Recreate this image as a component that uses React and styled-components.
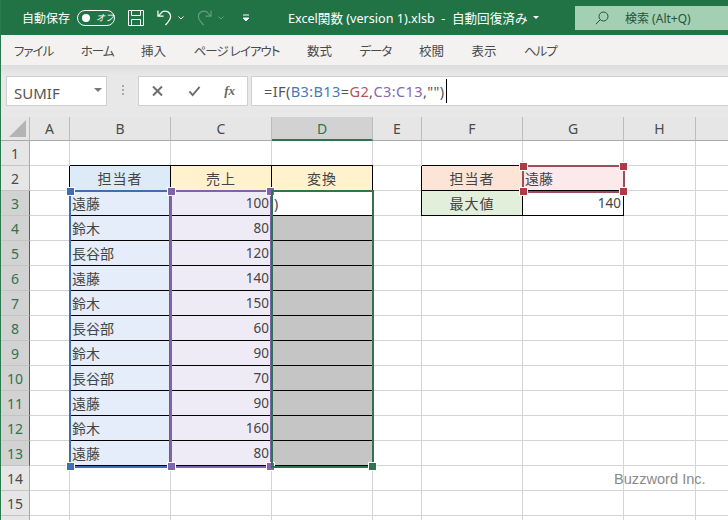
import React from 'react';
import styled, { createGlobalStyle } from 'styled-components';

const FONT = '"Noto Sans", "Noto Sans CJK JP", sans-serif';

const GlobalStyle = createGlobalStyle`
  html, body {
    margin: 0;
    padding: 0;
    background: #fff;
  }
  * {
    box-sizing: border-box;
  }
`;

const COLUMNS = ['A', 'B', 'C', 'D', 'E', 'F', 'G', 'H', ''];
const TABS = [
  { label: 'ファイル', tight: true },
  { label: 'ホーム', tight: true },
  { label: '挿入' },
  { label: 'ページ レイアウト', tight: true },
  { label: '数式' },
  { label: 'データ', tight: true },
  { label: '校閲' },
  { label: '表示' },
  { label: 'ヘルプ', tight: true },
];

const SALES = [
  ['遠藤', 100],
  ['鈴木', 80],
  ['長谷部', 120],
  ['遠藤', 140],
  ['鈴木', 150],
  ['長谷部', 60],
  ['鈴木', 90],
  ['長谷部', 70],
  ['遠藤', 90],
  ['鈴木', 160],
  ['遠藤', 80],
];

// contents of one sheet row, keyed by column letter
const rowCells = (row) => {
  if (row === 2) {
    return {
      B: { text: '担当者', bg: '#dcebf7', boxed: true, center: true },
      C: { text: '売上', bg: '#fff2cc', boxed: true, center: true },
      D: { text: '変換', bg: '#fff2cc', boxed: true, center: true },
      F: { text: '担当者', bg: '#fce4d6', boxed: true, center: true },
      G: { text: '遠藤', bg: '#fbe9ec', boxed: true },
    };
  }
  const cells = {};
  if (row >= 3 && row <= 13) {
    const [name, amount] = SALES[row - 3];
    cells.B = { text: name, bg: '#e4edf9', boxed: true };
    cells.C = { text: amount, bg: '#efebf6', boxed: true, right: true };
    cells.D = row === 3
      ? { text: ')', bg: '#fff', boxed: true }
      : { bg: '#c5c5c5', boxed: true };
  }
  if (row === 3) {
    cells.F = { text: '最大値', bg: '#e2efda', boxed: true, center: true };
    cells.G = { text: 140, bg: '#fff', boxed: true, right: true };
  }
  return cells;
};

// row 16 only peeks in at the window's bottom edge, its number is not visible
const ROWS = Array.from({ length: 16 }, (_, i) => i + 1);

const FORMULA = [
  ['=IF(', '#555'],
  ['B3:B13', '#4a78b5'],
  ['=', '#555'],
  ['G2', '#b5535d'],
  [',', '#555'],
  ['C3:C13', '#8668ae'],
  [',"")', '#555'],
];

const App = () => (
  <Page>
    <GlobalStyle />
    <TitleBar>
      <AutoSave>自動保存</AutoSave>
      <Toggle>
        <ToggleDot />
        <ToggleLabel>オフ</ToggleLabel>
      </Toggle>
      <SaveIcon viewBox="0 0 16 16">
        <path d="M.5.5h15v15H.5zM3.500.5v5h9v-5M3.500 15.500v-6h9v6" />
      </SaveIcon>
      <UndoIcon viewBox="0 0 16 18">
        <path d="M1 1.500v6h6M1.500 7.500l3.500-4c4-3 9.500-.5 9.500 4.500 0 3-1.500 5-5.500 9" />
      </UndoIcon>
      <SmallCaret viewBox="0 0 6 4"><path d="M.5.500 3 3 5.500.500" /></SmallCaret>
      <RedoIcon viewBox="0 0 16 18">
        <path d="M15 1.500v6H9M14.500 7.500l-3.500-4c-4-3-9.500-.5-9.500 4.500 0 3 1.500 5 5.500 9" />
      </RedoIcon>
      <FadedCaret viewBox="0 0 6 4"><path d="M.5.500 3 3 5.500.500" /></FadedCaret>
      <CustomizeIcon viewBox="0 0 8 8">
        <path d="M1 1h6" />
        <path d="M1 4h6L4 7z" fill="#fff" />
      </CustomizeIcon>
      <DocTitle>Excel関数 (version 1).xlsb  -  自動回復済み</DocTitle>
      <TitleCaret />
      <SearchBox>
        <SearchIcon viewBox="0 0 14 14">
          <circle cx="8.500" cy="5.500" r="4.500" />
          <path d="M5.300 8.700.8 13.200" />
        </SearchIcon>
        <SearchText>検索 (Alt+Q)</SearchText>
      </SearchBox>
    </TitleBar>

    <TabBar>
      {TABS.map((tab) => <Tab key={tab.label} $tight={tab.tight}>{tab.label}</Tab>)}
    </TabBar>

    <FormulaBand>
      <NameBox>
        SUMIF
        <NameCaret />
      </NameBox>
      <Grip />
      <ButtonBox>
        <BarIcon viewBox="0 0 12 12">
          <path d="M1.500 1.500l9 9M10.500 1.500l-9 9" />
        </BarIcon>
        <BarIcon viewBox="0 0 14 12">
          <path d="M1.500 6.500 5 10.500 12.500 1.500" />
        </BarIcon>
        <FxLabel>fx</FxLabel>
      </ButtonBox>
      <FormulaBox>
        {FORMULA.map(([text, color], i) => (
          <FormulaPart key={i} $color={color}>{text}</FormulaPart>
        ))}
        <Caret />
      </FormulaBox>
    </FormulaBand>

    <Sheet>
      <Corner>
        <CornerMark viewBox="0 0 17 17"><path d="M17 0v17H0z" /></CornerMark>
      </Corner>
      {COLUMNS.map((col) => (
        <ColHead key={col || 'I'} $active={col === 'D'}>{col}</ColHead>
      ))}
      {ROWS.map((row) => {
        const cells = rowCells(row);
        return (
          <React.Fragment key={row}>
            <RowHead $active={row >= 3 && row <= 13}>{row < 16 ? row : ''}</RowHead>
            {COLUMNS.map((col) => {
              const cell = cells[col] || {};
              return (
                <Cell
                  key={col || 'I'}
                  $bg={cell.bg}
                  $boxed={cell.boxed}
                  $center={cell.center}
                  $right={cell.right}
                >
                  {cell.text}
                </Cell>
              );
            })}
          </React.Fragment>
        );
      })}

      <RangeBox $left={68} $top={73} $width={102} $height={278} $color="#3f6fb0">
        <Handle $x="left" $y="top" $color="#3f6fb0" />
        <Handle $x="left" $y="bottom" $color="#3f6fb0" />
      </RangeBox>
      <RangeBox $left={169} $top={73} $width={102} $height={278} $color="#8064a8">
        <Handle $x="left" $y="top" $color="#8064a8" />
        <Handle $x="right" $y="top" $color="#8064a8" />
        <Handle $x="left" $y="bottom" $color="#8064a8" />
        <Handle $x="right" $y="bottom" $color="#8064a8" />
      </RangeBox>
      <RangeBox $left={270} $top={73} $width={103} $height={278} $color="#2f7350">
        <Handle $x="right" $y="bottom" $color="#2f7350" />
      </RangeBox>
      <RangeBox $left={521} $top={48} $width={103} $height={28} $color="#97505a">
        <Handle $x="left" $y="top" $color="#b03a48" />
        <Handle $x="right" $y="top" $color="#b03a48" />
        <Handle $x="left" $y="bottom" $color="#b03a48" />
        <Handle $x="right" $y="bottom" $color="#b03a48" />
      </RangeBox>
      <Watermark>Buzzword Inc.</Watermark>
    </Sheet>
  </Page>
);

const Page = styled.div`
  width: 728px;
  height: 520px;
  overflow: hidden;
  font-family: ${FONT};
  border-left: 1px solid #2b7a4f;
`;

const TitleBar = styled.header`
  display: flex;
  align-items: center;
  height: 35px;
  background: #217346;
  color: #fff;
  padding-left: 21px;
`;

const AutoSave = styled.span`
  font-size: 12px;
  width: 55px;
`;

const Toggle = styled.div`
  display: flex;
  align-items: center;
  gap: 6px;
  width: 38px;
  height: 16px;
  border: 1px solid #fff;
  border-radius: 8px;
  padding-left: 4px;
`;

const ToggleDot = styled.span`
  width: 8px;
  height: 8px;
  border-radius: 50%;
  background: #fff;
`;

const ToggleLabel = styled.span`
  font-size: 9px;
  line-height: 1;
  font-style: italic;
`;

const SaveIcon = styled.svg`
  width: 16px;
  height: 16px;
  margin-left: 13px;
  fill: none;
  stroke: #fff;
`;

const UndoIcon = styled.svg`
  width: 15px;
  height: 17px;
  margin-left: 13px;
  fill: none;
  stroke: #fff;
  stroke-width: 1.300;
`;

const RedoIcon = styled(UndoIcon)`
  margin-left: 13px;
  stroke: #5f9d7c;
`;

const SmallCaret = styled.svg`
  width: 6px;
  height: 4px;
  margin-left: 6px;
  fill: none;
  stroke: #fff;
`;

const FadedCaret = styled(SmallCaret)`
  stroke: #5f9d7c;
`;

const CustomizeIcon = styled.svg`
  width: 8px;
  height: 8px;
  margin-left: 18px;
  stroke: #fff;
  fill: none;
`;

const DocTitle = styled.span`
  margin-left: 38px;
  font-size: 12.600px;
  white-space: pre;
`;

const TitleCaret = styled.span`
  width: 0;
  height: 0;
  margin-left: 6px;
  border-left: 3px solid transparent;
  border-right: 3px solid transparent;
  border-top: 3px solid #fff;
`;

const SearchBox = styled.div`
  display: flex;
  align-items: center;
  margin-left: auto;
  width: 153px;
  height: 24px;
  background: #a3cfb3;
  color: #23553a;
  padding-left: 20px;
`;

const SearchIcon = styled.svg`
  width: 14px;
  height: 14px;
  fill: none;
  stroke: #23553a;
`;

const SearchText = styled.span`
  margin-left: 16px;
  font-size: 12px;
`;

const TabBar = styled.nav`
  display: flex;
  align-items: center;
  gap: 27.500px;
  height: 30px;
  padding-left: 13px;
  background: #f3f2f1;
`;

const Tab = styled.span`
  font-size: 12.500px;
  color: #4a4a4a;
  font-feature-settings: "palt";
  letter-spacing: ${({ $tight }) => ($tight ? '-1px' : '0')};
  white-space: pre;
`;

const FormulaBand = styled.div`
  display: flex;
  align-items: flex-start;
  height: 52px;
  padding: 11px 0 0 5px;
  background: linear-gradient(#dcdddc, #e7e8e7 10px, #e8e8e8);
`;

const Field = styled.div`
  height: 30px;
  background: #fff;
  border: 1px solid #cfcfcf;
  display: flex;
  align-items: center;
`;

const NameBox = styled(Field)`
  position: relative;
  width: 101px;
  padding: 3px 0 0 7px;
  font-size: 15px;
  color: #555;
`;

const NameCaret = styled.span`
  position: absolute;
  top: 11px;
  right: 4px;
  border-left: 4px solid transparent;
  border-right: 4px solid transparent;
  border-top: 4px solid #777;
`;

const Grip = styled.span`
  width: 2px;
  height: 11px;
  margin: 9px 14px 0 15px;
  background: repeating-linear-gradient(#aaa 0 2px, transparent 2px 4px);
`;

const ButtonBox = styled(Field)`
  justify-content: space-between;
  width: 110px;
  padding: 0 12px;
  margin-right: 3px;
`;

const BarIcon = styled.svg`
  width: 13px;
  height: 12px;
  fill: none;
  stroke: #6d6d6d;
  stroke-width: 2;
`;

const FxLabel = styled.span`
  font-family: "Liberation Serif", serif;
  font-style: italic;
  font-weight: 700;
  font-size: 13px;
  color: #666;
`;

const FormulaBox = styled(Field)`
  flex: 1;
  padding-left: 12px;
  border-right: 0;
  font-size: 14.500px;
  letter-spacing: 0.400px;
`;

const FormulaPart = styled.span`
  color: ${({ $color }) => $color};
  white-space: pre;
`;

const Caret = styled.span`
  width: 1px;
  height: 24px;
  margin-left: 1px;
  background: #000;
`;

const Sheet = styled.div`
  position: relative;
  display: grid;
  grid-template-columns: 29px 40px 101px 101px 101px 49px 101px 101px 72px 33px;
  grid-template-rows: 24px repeat(16, 25px);
`;

const Corner = styled.div`
  display: flex;
  align-items: flex-end;
  justify-content: flex-end;
  padding: 0 3px 3px 0;
  background: #e6e6e6;
  border-right: 1px solid #b8b8b8;
  border-bottom: 1px solid #a8a8a8;
`;

const CornerMark = styled.svg`
  width: 17px;
  height: 17px;
  fill: #b4b4b4;
`;

const ColHead = styled.div`
  display: flex;
  align-items: center;
  justify-content: center;
  font-size: 14px;
  background: ${({ $active }) => ($active ? '#d2d2d2' : '#e6e6e6')};
  color: ${({ $active }) => ($active ? '#2f7350' : '#4a4a4a')};
  border-right: 1px solid #bcbcbc;
  border-bottom: ${({ $active }) => ($active ? '2px solid #2f7350' : '1px solid #a8a8a8')};
`;

const RowHead = styled.div`
  display: flex;
  align-items: center;
  justify-content: center;
  font-size: 14px;
  background: ${({ $active }) => ($active ? '#d2d2d2' : '#e6e6e6')};
  color: ${({ $active }) => ($active ? '#2f7350' : '#4a4a4a')};
  border-right: ${({ $active }) => ($active ? '1px solid #2f7350' : '1px solid #a8a8a8')};
  border-bottom: 1px solid #c4c4c4;
`;

const Cell = styled.div`
  display: flex;
  align-items: center;
  justify-content: ${({ $center, $right }) => ($center ? 'center' : $right ? 'flex-end' : 'flex-start')};
  padding: 0 2px;
  font-size: ${({ $right }) => ($right ? '13.500px' : '14px')};
  letter-spacing: ${({ $center }) => ($center ? '1px' : '0')};
  color: #444;
  background: ${({ $bg }) => $bg || '#fff'};
  border-right: 1px solid ${({ $boxed }) => ($boxed ? '#000' : '#d4d4d4')};
  border-bottom: 1px solid ${({ $boxed }) => ($boxed ? '#000' : '#d4d4d4')};
  box-shadow: ${({ $boxed }) => ($boxed ? '-1px 0 0 #000, 0 -1px 0 #000' : 'none')};
`;

const RangeBox = styled.div`
  position: absolute;
  left: ${({ $left }) => $left}px;
  top: ${({ $top }) => $top}px;
  width: ${({ $width }) => $width}px;
  height: ${({ $height }) => $height}px;
  border: 2px solid ${({ $color }) => $color};
  pointer-events: none;
`;

const Handle = styled.span`
  position: absolute;
  ${({ $x }) => $x}: -4px;
  ${({ $y }) => $y}: -4px;
  width: 7px;
  height: 7px;
  background: ${({ $color }) => $color};
  outline: 1px solid #fff;
`;

const Watermark = styled.span`
  position: absolute;
  left: 613px;
  top: 354px;
  font-family: "Liberation Sans", sans-serif;
  font-size: 14.600px;
  color: #8a8a8a;
`;

export default App;
